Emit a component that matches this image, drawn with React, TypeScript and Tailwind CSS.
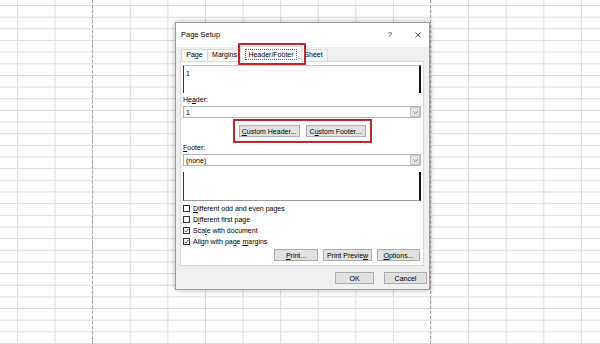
import type { ReactNode } from 'react';

function U({ children }: { children: ReactNode }) {
  return <span className="underline decoration-[0.6px] underline-offset-[1px]">{children}</span>;
}

function Btn({ children, className = '' }: { children: ReactNode; className?: string }) {
  return (
    <div
      className={`flex h-[12px] items-center justify-center border border-[#adadad] bg-[#e1e1e1] leading-none ${className}`}
    >
      {children}
    </div>
  );
}

function Select({ value }: { value: string }) {
  return (
    <div className="flex h-[12px] w-[238px] items-center border border-[#b4b4b4] bg-white pl-[2px]">
      <span className="flex-1 leading-none">{value}</span>
      <div className="flex h-[10px] w-[10px] items-center justify-center border border-[#c6c6c6] bg-[#e5e5e5]">
        <svg width="5" height="3" viewBox="0 0 5 3">
          <path d="M0.4 0.4 L2.5 2.5 L4.6 0.4" stroke="#606060" strokeWidth="0.8" fill="none" />
        </svg>
      </div>
    </div>
  );
}

function Check({ checked, children }: { checked?: boolean; children: ReactNode }) {
  return (
    <div className="flex h-[11px] items-center gap-[3px]">
      <div className="flex h-[7px] w-[7px] items-center justify-center border border-[#333] bg-white">
        {checked && (
          <svg width="5" height="5" viewBox="0 0 5 5">
            <path d="M0.5 2.6 L1.9 4 L4.6 0.9" stroke="#222" strokeWidth="0.8" fill="none" />
          </svg>
        )}
      </div>
      <span className="leading-none">{children}</span>
    </div>
  );
}

export default function App() {
  return (
    <div className="relative h-[344px] w-[600px] overflow-hidden bg-white bg-[linear-gradient(to_right,#dcdcdc_1px,transparent_1px),linear-gradient(to_bottom,#dcdcdc_1px,transparent_1px)] bg-size-[37.6px_11.67px] bg-position-[17px_5px] font-['Liberation_Sans',Arial,sans-serif] text-[7px] text-black">
      {/* page breaks */}
      <div className="absolute left-[92px] top-0 h-full border-l border-dashed border-[#a5a5a5]" />
      <div className="absolute left-[430px] top-0 h-full border-l border-dashed border-[#a5a5a5]" />

      <div className="relative z-10 pl-[175px] pt-[22px]">
        {/* Page Setup dialog */}
        <div className="relative flex h-[268px] w-[255px] flex-col border border-[#9b9b9b] bg-[#f0f0f0] shadow-[0_0_6px_rgba(0,0,0,0.3)]">
          <div className="flex h-[24px] items-center bg-white pl-[5px] pr-[8px]">
            <span className="flex-1 text-[7.5px]">Page Setup</span>
            <span className="mr-[23px] text-[7.5px]">?</span>
            <svg width="6" height="6" viewBox="0 0 6 6">
              <path d="M0.5 0.5 L5.5 5.5 M5.5 0.5 L0.5 5.5" stroke="#333" strokeWidth="0.8" />
            </svg>
          </div>

          {/* tabs */}
          <div className="flex h-[14px] items-end pl-[5px]">
            <div className="flex h-[12px] w-[27px] items-center justify-center border border-b-0 border-[#d9d9d9] bg-[#f7f7f7]">
              Page
            </div>
            <div className="flex h-[12px] w-[34px] items-center justify-center border border-b-0 border-l-0 border-[#d9d9d9] bg-[#f7f7f7]">
              Margins
            </div>
            <div className="relative z-10 -mx-[2px] -mb-[1px] flex h-[16px] w-[62px] items-center justify-center border border-b-0 border-[#d9d9d9] bg-white">
              <span className="border border-dotted border-[#666] px-[2px] py-[1px] leading-none">Header/Footer</span>
            </div>
            <div className="flex h-[12px] w-[28px] items-center justify-center border border-b-0 border-l-0 border-[#d9d9d9] bg-[#f7f7f7]">
              Sheet
            </div>
          </div>

          {/* tab panel */}
          <div className="ml-[4px] flex w-[244px] flex-col border border-[#d9d9d9] bg-white px-[2px] pb-[4px] pt-[3px]">
            <div className="h-[28px] border-l border-r-2 border-t border-l-[#333] border-r-[#111] border-t-[#c8c8c8] pl-[2px] pt-[4px] leading-none">
              1
            </div>
            <div className="mt-[3px] h-[8px] leading-[8px]">
              He<U>a</U>der:
            </div>
            <div className="mt-[2px]">
              <Select value="1" />
            </div>
            <div className="mt-[1px] flex justify-center">
              <div className="flex h-[24px] items-center gap-[6px] border-2 border-[#c0272d] px-[4px]">
                <Btn className="w-[61px]">
                  <U>C</U>ustom Header...
                </Btn>
                <Btn className="w-[60px]">
                  C<U>u</U>stom Footer...
                </Btn>
              </div>
            </div>
            <div className="mt-[1px] h-[8px] leading-[8px]">
              <U>F</U>ooter:
            </div>
            <div className="mt-[2px]">
              <Select value="(none)" />
            </div>
            <div className="mt-[6px] h-[29px] border-b border-l border-r-2 border-b-[#9a9a9a] border-l-[#333] border-r-[#111]" />
            <div className="mt-[2px] flex flex-col">
              <Check>
                <U>D</U>ifferent odd and even pages
              </Check>
              <Check>
                D<U>i</U>fferent first page
              </Check>
              <Check checked>
                Sca<U>l</U>e with document
              </Check>
              <Check checked>
                Align with page <U>m</U>argins
              </Check>
            </div>
            <div className="mt-[2px] flex justify-end gap-[5px] pr-[1px]">
              <Btn className="w-[44px]">
                <U>P</U>rint...
              </Btn>
              <Btn className="w-[49px]">
                Print Previe<U>w</U>
              </Btn>
              <Btn className="w-[43px]">
                <U>O</U>ptions...
              </Btn>
            </div>
          </div>

          <div className="mt-[6px] flex justify-end gap-[10px] pr-[2px]">
            <Btn className="w-[39px] border-[#0078d7]">OK</Btn>
            <Btn className="w-[43px]">Cancel</Btn>
          </div>

          {/* annotation around the active tab */}
          <div className="absolute left-[62px] top-[20px] h-[22px] w-[68px] border-2 border-[#c0272d]" />
        </div>
      </div>
    </div>
  );
}
